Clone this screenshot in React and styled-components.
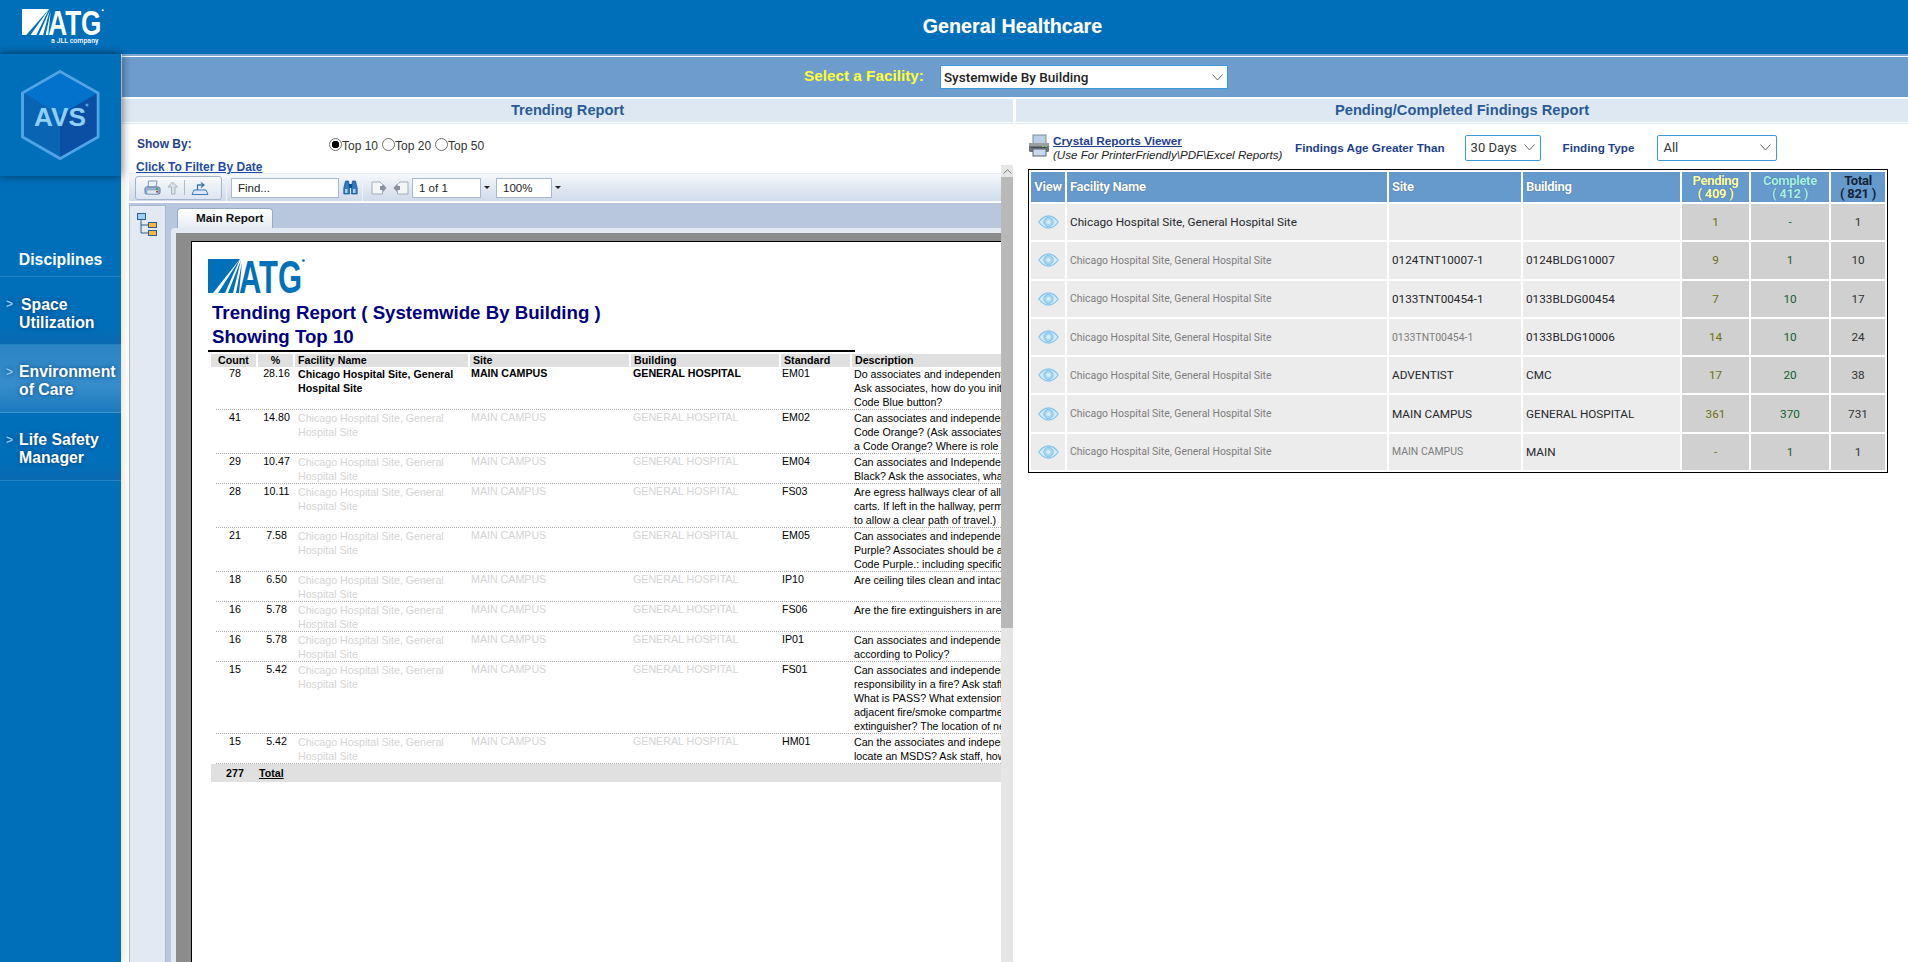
import styled, { createGlobalStyle } from 'styled-components';

const GlobalStyle = createGlobalStyle`
  html, body { margin: 0; padding: 0; background: #fff; }
  body { font-family: "Liberation Sans", Arial, sans-serif; font-size: 12px; color: #000; }
  * { box-sizing: border-box; }
`;

const AtgLogo = ({ color, width, height }) => (
  <svg width={width} height={height} viewBox="0 0 97 34" preserveAspectRatio="none" overflow="visible">
    <g fill={color}>
      <polygon points="0,0 32,0 5,34 0,34" />
      <polygon points="32,0 10,34 17,34" />
      <polygon points="33,1 20,34 25,34" />
      <polygon points="34,3 28,34 31,34" />
      <text x="31" y="33.6" fontFamily="Liberation Sans" fontWeight="700" fontSize="46" textLength="63" lengthAdjust="spacingAndGlyphs">ATG</text>
      <circle cx="95.5" cy="1.6" r="1.3" />
    </g>
  </svg>
);

const AvsLogo = () => (
  <svg width="80" height="90" viewBox="0 0 80 90">
    <polygon points="39,1.5 77,23 77,67 39,88.5 1.5,67 1.5,23" fill="#0a64b4" stroke="#4fa3e6" strokeWidth="3" />
    <polygon points="39,3.5 75,23.5 39,45 3.5,23.5" fill="#0272cc" />
    <polygon points="39,45 75.5,24 75.5,66 39,87" fill="#0a4fa3" />
    <text x="39" y="56" textAnchor="middle" fontFamily="Liberation Sans" fontWeight="700" fontSize="25" fill="#8ed0f6" textLength="52" lengthAdjust="spacingAndGlyphs">AVS</text>
    <circle cx="66" cy="35" r="1.5" fill="#4fa3e6" />
  </svg>
);

const Chevron = () => (
  <svg width="11" height="7" viewBox="0 0 11 7" fill="none" stroke="#666" strokeWidth="1">
    <path d="M0.5 0.5 L5.5 6 L10.5 0.5" />
  </svg>
);

const EyeIcon = () => (
  <svg width="21" height="14" viewBox="0 0 21 14">
    <path d="M0.8 7 C4 2.4 7 1 10.5 1 C14 1 17 2.4 20.2 7 C17 11.6 14 13 10.5 13 C7 13 4 11.6 0.8 7 Z" fill="#d5eaf8" stroke="#8cc6ec" strokeWidth="1.3" />
    <circle cx="10.5" cy="7" r="4.6" fill="#a6d5f2" stroke="#84c2ea" strokeWidth="1" />
    <circle cx="10.5" cy="7" r="2.1" fill="#d8eefb" />
  </svg>
);

const BigPrinter = () => (
  <svg width="22" height="24" viewBox="0 0 22 24">
    <rect x="5" y="1" width="13" height="9" fill="#b9cfe6" stroke="#7d8a99" />
    <rect x="1" y="9" width="20" height="9" rx="1.5" fill="#6f7478" />
    <rect x="1" y="9" width="20" height="3" fill="#9a9fa3" />
    <rect x="3" y="13" width="16" height="1" fill="#4a4e52" />
    <rect x="5" y="15" width="13" height="7" fill="#c6d9ee" stroke="#5a6672" />
    <rect x="14" y="12" width="2" height="1" fill="#6fd06f" />
    <rect x="17" y="12" width="2" height="1" fill="#6fd06f" />
  </svg>
);

const ToolPrinter = () => (
  <svg width="17" height="16" viewBox="0 0 17 16">
    <path d="M4.5 1 L13 1 L12 7 L4 7 Z" fill="#eef3f9" stroke="#7d94b4" />
    <rect x="1" y="7" width="15" height="7" rx="1.5" fill="#9db6d6" stroke="#5b7ba4" />
    <rect x="3" y="10" width="11" height="4" fill="#dfe8f3" stroke="#7d94b4" strokeWidth="0.6" />
    <rect x="12" y="8" width="2" height="2" fill="#4aa04a" />
    <rect x="12" y="11" width="2" height="1.5" fill="#c04040" />
  </svg>
);

const ToolUp = () => (
  <svg width="13" height="14" viewBox="0 0 13 14">
    <path d="M6.5 1 L11.5 6 L9 6 L9 13 L5.5 13 L5.5 6 L2 6 Z" fill="#dce2ea" stroke="#a8b3c0" strokeWidth="1" />
  </svg>
);

const ToolExport = () => (
  <svg width="18" height="16" viewBox="0 0 18 16" fill="none">
    <path d="M1 14.5 L17 14.5 L15 10 L3 10 Z" fill="#dbe8f7" stroke="#3d78b8" />
    <path d="M6.5 10 L6.5 5 L12 5 M10 2.5 L13 5 L10 7.5" stroke="#3d78b8" strokeWidth="1.3" />
  </svg>
);

const Binoculars = () => (
  <svg width="15" height="15" viewBox="0 0 15 15">
    <path d="M2.5 1 L5.5 1 L6.5 7 L6.5 14 L0.8 14 L0.8 8 Z" fill="#2f78c4" stroke="#134f8e" strokeWidth="0.7" />
    <path d="M12.5 1 L9.5 1 L8.5 7 L8.5 14 L14.2 14 L14.2 8 Z" fill="#2f78c4" stroke="#134f8e" strokeWidth="0.7" />
    <rect x="6" y="4" width="3" height="4" fill="#134f8e" />
    <rect x="2" y="9" width="2.5" height="4" fill="#a9d0f2" />
    <rect x="10" y="9" width="2.5" height="4" fill="#a9d0f2" />
  </svg>
);

const PageIcon = ({ flip }) => (
  <svg width="16" height="14" viewBox="0 0 16 14" style={flip ? { transform: 'scaleX(-1)' } : undefined}>
    <path d="M1 1 L9 1 L11.5 3.5 L11.5 13 L1 13 Z" fill="#f4f5f7" stroke="#a4adb8" />
    <path d="M9 5 L12 5 L12 3 L15.5 7 L12 11 L12 9 L9 9 Z" fill="#8b929b" />
  </svg>
);

const TreeIcon = () => (
  <svg width="20" height="23" viewBox="0 0 20 23" fill="none">
    <path d="M4 7 L4 20 L12 20 M4 12 L12 12" stroke="#2c5f8d" strokeWidth="1" />
    <rect x="0.5" y="0.5" width="8" height="6" fill="#9fd0f2" stroke="#2c5f8d" />
    <rect x="11.5" y="9.5" width="8" height="5" fill="#f6b93e" stroke="#2c5f8d" />
    <rect x="11.5" y="17.5" width="8" height="5" fill="#f6b93e" stroke="#2c5f8d" />
  </svg>
);

const trendingRows = [
  { count: 78, pct: '28.16', std: 'EM01', strong: true, lines: ['Do associates and independent contractors', 'Ask associates, how do you initiate a', 'Code Blue button?'], h: 44 },
  { count: 41, pct: '14.80', std: 'EM02', lines: ['Can associates and independent contractors', 'Code Orange? (Ask associates what to do', 'a Code Orange?  Where is role defined'], h: 44 },
  { count: 29, pct: '10.47', std: 'EM04', lines: ['Can associates and Independent contractors', 'Black? Ask the associates, what to do'], h: 30 },
  { count: 28, pct: '10.11', std: 'FS03', lines: ['Are egress hallways clear of all equipment', 'carts. If left in the hallway, permitted', 'to allow a clear path of travel.)'], h: 44 },
  { count: 21, pct: '7.58', std: 'EM05', lines: ['Can associates and independent contractors', 'Purple? Associates should be able to', 'Code Purple.: including specific roles'], h: 44 },
  { count: 18, pct: '6.50', std: 'IP10', lines: ['Are ceiling tiles clean and intact?'], h: 30 },
  { count: 16, pct: '5.78', std: 'FS06', lines: ['Are the fire extinguishers in areas'], h: 30 },
  { count: 16, pct: '5.78', std: 'IP01', lines: ['Can associates and independent contractors', 'according to Policy?'], h: 30 },
  { count: 15, pct: '5.42', std: 'FS01', lines: ['Can associates and independent contractors', 'responsibility in a fire? Ask staff what', 'What is PASS? What extension is the', 'adjacent fire/smoke compartment? The', 'extinguisher? The location of nearest'], h: 72 },
  { count: 15, pct: '5.42', std: 'HM01', lines: ['Can the associates and independent', 'locate an MSDS? Ask staff, how do you'], h: 30 },
];

const findingRows = [
  { facility: 'Chicago Hospital Site, General Hospital Site', main: true, site: '', building: '', pending: '1', complete: '-', total: '1' },
  { facility: 'Chicago Hospital Site, General Hospital Site', site: '0124TNT10007-1', building: '0124BLDG10007', pending: '9', complete: '1', total: '10' },
  { facility: 'Chicago Hospital Site, General Hospital Site', site: '0133TNT00454-1', building: '0133BLDG00454', pending: '7', complete: '10', total: '17' },
  { facility: 'Chicago Hospital Site, General Hospital Site', site: '0133TNT00454-1', siteDim: true, building: '0133BLDG10006', pending: '14', complete: '10', total: '24' },
  { facility: 'Chicago Hospital Site, General Hospital Site', site: 'ADVENTIST', building: 'CMC', pending: '17', complete: '20', total: '38' },
  { facility: 'Chicago Hospital Site, General Hospital Site', site: 'MAIN CAMPUS', building: 'GENERAL HOSPITAL', pending: '361', complete: '370', total: '731' },
  { facility: 'Chicago Hospital Site, General Hospital Site', site: 'MAIN CAMPUS', siteDim: true, building: 'MAIN', pending: '-', complete: '1', total: '1' },
];

const App = () => (
  <>
    <GlobalStyle />
    <Page>
      <Header>
        <HeaderLogo>
          <AtgLogo color="#fff" width={82} height={26} />
          <JllText>a JLL company</JllText>
        </HeaderLogo>
        <HeaderTitle>General Healthcare</HeaderTitle>
      </Header>

      <Body>
        <Sidebar>
          <LogoBox><AvsLogo /></LogoBox>
          <Disciplines>Disciplines</Disciplines>
          <NavItem $nudge={1}><NavMark>&gt;</NavMark><SpaceWord>Space</SpaceWord><br />Utilization</NavItem>
          <NavItem $active><NavMark>&gt;</NavMark>Environment<br />of Care</NavItem>
          <NavItem><NavMark>&gt;</NavMark>Life Safety<br />Manager</NavItem>
        </Sidebar>

        <Main>
          <FacilityBar>
            <FacilityLabel>Select a Facility:</FacilityLabel>
            <FacilitySelect>
              Systemwide By Building
              <Chevron />
            </FacilitySelect>
          </FacilityBar>

          <Panels>
            <LeftPanel>
              <PanelHeading>Trending Report</PanelHeading>
              <ShowBy>
                <ShowByLabel>Show By:</ShowByLabel>
                <RadioGroup>
                  <Radio $checked />Top 10
                  <Radio />Top 20
                  <Radio />Top 50
                </RadioGroup>
              </ShowBy>
              <FilterLink>Click To Filter By Date</FilterLink>

              <Viewer>
                <ViewerMain>
                  <Toolbar>
                    <ToolGroup>
                      <ToolPrinter />
                      <ToolUp />
                      <ToolDivider />
                      <ToolExport />
                    </ToolGroup>
                    <ToolSep />
                    <ToolInput $w={108}>Find...</ToolInput>
                    <Binoculars />
                    <ToolSep />
                    <IconSlot $left={4}><PageIcon /></IconSlot>
                    <IconSlot $left={2}><PageIcon flip /></IconSlot>
                    <ToolInput $w={69} $left={-1}>1 of 1</ToolInput>
                    <Caret />
                    <ToolInput $w={56}>100%</ToolInput>
                    <Caret />
                  </Toolbar>

                  <ViewerContent>
                    <TreePanel><TreeIcon /></TreePanel>
                    <TabArea>
                      <MainTab>Main Report</MainTab>
                      <TabFrame>
                        <GreyDesk>
                          <ReportPage>
                            <ReportLogo><AtgLogo color="#0070b9" width={97} height={34} /></ReportLogo>
                            <ReportTitle>Trending Report ( Systemwide By Building )<br />Showing Top 10</ReportTitle>
                            <TitleRule />
                            <ReportHead>
                              <HeadCell $center>Count</HeadCell>
                              <HeadCell $center>%</HeadCell>
                              <HeadCell>Facility Name</HeadCell>
                              <HeadCell>Site</HeadCell>
                              <HeadCell>Building</HeadCell>
                              <HeadCell>Standard</HeadCell>
                              <HeadCell>Description</HeadCell>
                            </ReportHead>
                            {trendingRows.map((row, i) => (
                              <ReportRow key={i} $h={row.h}>
                                <CountCell>{row.count}</CountCell>
                                <PctCell>{row.pct}</PctCell>
                                <FacilityCell $strong={row.strong}>Chicago Hospital Site, General Hospital Site</FacilityCell>
                                <SiteCell $strong={row.strong} $dim={!row.strong}>MAIN CAMPUS</SiteCell>
                                <SiteCell $strong={row.strong} $dim={!row.strong} $pad={1}>GENERAL HOSPITAL</SiteCell>
                                <SiteCell>{row.std}</SiteCell>
                                <DescCell>{row.lines.map((l, j) => <div key={j}>{l}</div>)}</DescCell>
                              </ReportRow>
                            ))}
                            <TotalBar>
                              <TotalCount>277</TotalCount>
                              <TotalLabel>Total</TotalLabel>
                            </TotalBar>
                          </ReportPage>
                        </GreyDesk>
                      </TabFrame>
                    </TabArea>
                  </ViewerContent>
                </ViewerMain>
                <Scrollbar>
                  <ScrollUp>
                    <svg width="9" height="5" viewBox="0 0 9 5" fill="none" stroke="#777"><path d="M0.5 4.5 L4.5 0.8 L8.5 4.5" /></svg>
                  </ScrollUp>
                  <ScrollThumb />
                </Scrollbar>
              </Viewer>
            </LeftPanel>

            <RightPanel>
              <PanelHeading>Pending/Completed Findings Report</PanelHeading>
              <FindingsTools>
                <PrinterSlot><BigPrinter /></PrinterSlot>
                <CrystalBlock>
                  <CrystalLink>Crystal Reports Viewer</CrystalLink>
                  <CrystalNote>(Use For PrinterFriendly\PDF\Excel Reports)</CrystalNote>
                </CrystalBlock>
                <ToolLabel $left={13}>Findings Age Greater Than</ToolLabel>
                <FilterSelect $w={76} $left={20}>30 Days<Chevron /></FilterSelect>
                <ToolLabel $left={22}>Finding Type</ToolLabel>
                <FilterSelect $w={120} $left={23}>All<Chevron /></FilterSelect>
              </FindingsTools>

              <FindingsTable>
                <thead>
                  <tr>
                    <Th $w={34} $center>View</Th>
                    <Th $w={320}>Facility Name</Th>
                    <Th $w={132}>Site</Th>
                    <Th $w={157}>Building</Th>
                    <Th $w={67} $center $color="#ffffa6">Pending<br />( 409 )</Th>
                    <Th $w={78} $center $color="#a9f3e4">Complete<br />( 412 )</Th>
                    <Th $w={54} $center $color="#14233a" $plain>Total<br />( 821 )</Th>
                  </tr>
                </thead>
                <tbody>
                  {findingRows.map((row, i) => (
                    <tr key={i}>
                      <Td $center><EyeIcon /></Td>
                      <Td $dim={!row.main}>{row.facility}</Td>
                      <Td $dim={row.siteDim}>{row.site}</Td>
                      <Td>{row.building}</Td>
                      <NumTd $color="#6f6f12">{row.pending}</NumTd>
                      <NumTd $color="#14602f">{row.complete}</NumTd>
                      <NumTd $color="#333">{row.total}</NumTd>
                    </tr>
                  ))}
                </tbody>
              </FindingsTable>
            </RightPanel>
          </Panels>
        </Main>
      </Body>
    </Page>
  </>
);

export default App;

const Page = styled.div`
  width: 1908px;
  height: 962px;
  overflow: hidden;
  display: flex;
  flex-direction: column;
`;

const Header = styled.header`
  height: 54px;
  flex: none;
  background: #006fba;
  display: flex;
  align-items: center;
`;

const HeaderLogo = styled.div`
  width: 121px;
  padding: 9px 0 0 22px;
  display: flex;
  flex-direction: column;
  height: 54px;
`;

const JllText = styled.div`
  color: #fff;
  font: 500 7px "Roboto", sans-serif;
  margin: 2px 0 0 29px;
  white-space: nowrap;
  line-height: 9px;
`;

const HeaderTitle = styled.div`
  flex: 1;
  padding: 0 4px 2px 0;
  text-align: center;
  color: #fff;
  font: 700 19.7px "Liberation Sans", sans-serif;
  text-shadow: 0 0 1px rgba(255, 255, 255, 0.3);
`;

const Body = styled.div`
  flex: 1;
  display: flex;
  min-height: 0;
`;

const Sidebar = styled.nav`
  width: 121px;
  flex: none;
  background: #006fba;
  position: relative;
  z-index: 2;
  box-shadow: 2px 0 8px rgba(0, 0, 0, 0.12);
`;

const LogoBox = styled.div`
  height: 122px;
  background: #006fba;
  padding: 16px 0 0 21px;
  box-shadow: 0 0 9px rgba(0, 0, 0, 0.5);
  position: relative;
`;

const Disciplines = styled.div`
  height: 101px;
  padding-top: 75px;
  text-align: center;
  color: #fff;
  font: 700 15.8px/18px "Liberation Sans", sans-serif;
  border-bottom: 1px solid rgba(255, 255, 255, 0.12);
`;

const NavItem = styled.div`
  height: 68px;
  padding: ${(p) => 18 + (p.$nudge || 0)}px 0 0 19px;
  position: relative;
  color: #fff;
  font: 700 15.8px/18px "Liberation Sans", sans-serif;
  text-shadow: 0 0 4px rgba(0, 50, 100, 0.8);
  white-space: nowrap;
  background: ${(p) => (p.$active
    ? 'linear-gradient(#2c84c5, #378dcb 60%, #1c7abf)'
    : 'linear-gradient(#006fba 70%, #0a69b0)')};
  border-bottom: 1px solid rgba(255, 255, 255, 0.12);
`;

const SpaceWord = styled.span`
  padding-left: 2px;
`;

const NavMark = styled.span`
  position: absolute;
  left: 6px;
  top: 18px;
  color: #86c8f0;
  font-size: 12px;
`;

const Main = styled.main`
  flex: 1;
  min-width: 0;
  margin-left: 1px;
  background: #fff;
  display: flex;
  flex-direction: column;
`;

const FacilityBar = styled.div`
  height: 43px;
  flex: none;
  background: #6d9ccd;
  border-top: 2px solid #7ea8d4;
  box-shadow: inset 0 1px 0 #fff;
  padding: 9px 0 0 2px;
  display: flex;
  justify-content: center;
`;

const FacilityLabel = styled.div`
  color: #ffff33;
  font: 700 15.3px/22px "Liberation Sans", sans-serif;
  margin-right: 16px;
`;

const FacilitySelect = styled.div`
  width: 288px;
  height: 24px;
  background: #fff;
  border: 1px solid #3a9ae0;
  padding: 0 4px 0 3px;
  display: flex;
  align-items: center;
  justify-content: space-between;
  font: 500 13.5px "Roboto", sans-serif;
  color: #222;
`;

const Panels = styled.div`
  flex: 1;
  min-height: 0;
  display: flex;
  gap: 3px;
  padding-top: 2px;
`;

const LeftPanel = styled.section`
  width: 891px;
  flex: none;
  display: flex;
  flex-direction: column;
`;

const RightPanel = styled.section`
  flex: 1;
  min-width: 0;
`;

const PanelHeading = styled.div`
  height: 23px;
  flex: none;
  background: #dee8f3;
  box-shadow: 0 1px 0 #fff, 0 2px 0 #dee8f3;
  text-align: center;
  color: #2a5a96;
  font: 700 14.67px/23px "Liberation Sans", sans-serif;
`;

const ShowBy = styled.div`
  display: grid;
  grid-template-columns: 192px auto;
  padding: 15px 0 0 15px;
  height: 40px;
  justify-content: start;
`;

const ShowByLabel = styled.div`
  color: #1f3f8c;
  font: 700 12px/15px "Liberation Sans", sans-serif;
`;

const RadioGroup = styled.div`
  display: flex;
  align-items: center;
  height: 15px;
  color: #333;
  font: 12px "Liberation Sans", sans-serif;
  margin-top: 1px;
`;

const Radio = styled.span`
  width: 13px;
  height: 13px;
  margin: -2px 0 0 4px;
  border-radius: 50%;
  border: 1px solid #6f6f6f;
  background: ${(p) => (p.$checked ? 'radial-gradient(circle, #000 3.5px, #fff 4px)' : '#fff')};
  &:first-child { margin-left: 0; }
`;

const FilterLink = styled.a`
  display: block;
  height: 11px;
  padding-left: 14px;
  color: #1f4ba5;
  font: 700 12px/11px "Liberation Sans", sans-serif;
  text-decoration: underline;
  position: relative;
`;

const Viewer = styled.div`
  flex: 1;
  min-height: 0;
  display: flex;
  margin-left: 7px;
`;

const ViewerMain = styled.div`
  flex: 1;
  min-width: 0;
  display: flex;
  flex-direction: column;
`;

const Toolbar = styled.div`
  height: 28px;
  flex: none;
  background: linear-gradient(#f6f8fb, #cfdaea);
  border-top: 1px solid #e8eef5;
  padding-left: 6px;
  display: flex;
  align-items: center;
  gap: 4px;
`;

const ToolGroup = styled.div`
  width: 87px;
  height: 24px;
  border: 1px solid #a3b5cd;
  border-radius: 3px;
  background: linear-gradient(#f7f9fc, #dde5f0);
  display: flex;
  align-items: center;
  gap: 5px;
  padding-left: 8px;
`;

const ToolDivider = styled.span`
  width: 1px;
  height: 15px;
  background: #aebccd;
  margin-right: 1px;
`;

const ToolSep = styled.span`
  width: 1px;
  height: 27px;
  background: #eef2f7;
`;

const IconSlot = styled.span`
  display: flex;
  margin-left: ${(p) => p.$left}px;
`;

const ToolInput = styled.div`
  width: ${(p) => p.$w}px;
  height: 20px;
  margin-left: ${(p) => p.$left || 0}px;
  background: #fff;
  border: 1px solid #a8b8ce;
  padding-left: 6px;
  font: 11.5px/18px "Liberation Sans", sans-serif;
  color: #222;
`;

const Caret = styled.span`
  width: 0;
  height: 0;
  border-left: 3px solid transparent;
  border-right: 3px solid transparent;
  border-top: 3px solid #222;
  margin: 0 2px 0 -1px;
`;

const ViewerContent = styled.div`
  flex: 1;
  min-height: 0;
  display: flex;
  border-top: 2px solid #fff;
  background: #b8c7de;
`;

const TreePanel = styled.div`
  width: 37px;
  flex: none;
  margin-top: 2px;
  background: #e3e9f2;
  border: 1px solid #a9b9d0;
  border-bottom: none;
  padding: 7px 0 0 7px;
`;

const TabArea = styled.div`
  flex: 1;
  min-width: 0;
  display: flex;
  flex-direction: column;
  padding-left: 5px;
`;

const MainTab = styled.div`
  width: 96px;
  height: 20px;
  flex: none;
  margin: 5px 0 0 6px;
  background: linear-gradient(#fff, #e6ecf4);
  border: 1px solid #96a9c6;
  border-bottom: none;
  border-radius: 4px 4px 0 0;
  padding-left: 18px;
  font: 700 11.67px/18px "Liberation Sans", sans-serif;
  color: #111;
`;

const TabFrame = styled.div`
  flex: 1;
  min-height: 0;
  display: flex;
  background: #e3e9f2;
  border-radius: 4px 0 0 0;
  padding: 5px 0 0 5px;
`;

const GreyDesk = styled.div`
  flex: 1;
  min-width: 0;
  display: flex;
  background: #8c8c8c;
  padding: 8px 0 0 15px;
`;

const ReportPage = styled.div`
  flex: 1;
  min-width: 0;
  background: #fff;
  border-left: 1px solid #000;
  border-top: 1px solid #000;
  overflow: hidden;
  font: 10.67px/14px "Liberation Sans", sans-serif;
  color: #000;
`;

const ReportLogo = styled.div`
  height: 34px;
  margin: 17px 0 8px 16px;
  display: flex;
`;

const ReportTitle = styled.div`
  margin-left: 20px;
  color: #000080;
  font: 700 18.67px/24px "Liberation Sans", sans-serif;
  white-space: nowrap;
`;

const TitleRule = styled.div`
  width: 647px;
  height: 2px;
  margin: 1px 0 2px 16px;
  background: #000;
`;

const ReportHead = styled.div`
  display: grid;
  grid-template-columns: 47px 37px 175px 161px 150px 71px 300px;
  margin-left: 19px;
  height: 12px;
`;

const HeadCell = styled.div`
  background: #e0e0e0;
  border-right: 2px solid #fff;
  padding-left: ${(p) => (p.$center ? 0 : 3)}px;
  text-align: ${(p) => (p.$center ? 'center' : 'left')};
  font: 700 10.67px/13px "Liberation Sans", sans-serif;
  &:last-child { border-right: none; }
`;

const ReportRow = styled.div`
  display: grid;
  grid-template-columns: 42px 37px 176px 161px 150px 71px 300px;
  margin-left: 24px;
  height: ${(p) => p.$h}px;
  border-bottom: 1px dotted #aaa;
  white-space: nowrap;
`;

const CountCell = styled.div`
  text-align: center;
  padding-right: 4px;
`;

const PctCell = styled.div`
  text-align: center;
`;

const FacilityCell = styled.div`
  padding: 1px 8px 0 3px;
  white-space: normal;
  font-weight: ${(p) => (p.$strong ? 700 : 400)};
  color: ${(p) => (p.$strong ? '#000' : '#d4d4d4')};
`;

const SiteCell = styled.div`
  padding-left: ${(p) => p.$pad || 0}px;
  font-weight: ${(p) => (p.$strong ? 700 : 400)};
  color: ${(p) => (p.$dim ? '#d4d4d4' : '#000')};
`;

const DescCell = styled.div`
  padding: 1px 0 0 1px;
`;

const TotalBar = styled.div`
  margin-left: 19px;
  height: 18px;
  background: #e0e0e0;
  display: flex;
  align-items: center;
  font-weight: 700;
`;

const TotalCount = styled.div`
  width: 48px;
  text-align: center;
`;

const TotalLabel = styled.div`
  text-decoration: underline;
`;

const Scrollbar = styled.div`
  width: 12px;
  flex: none;
  margin-top: -8px;
  background: #e6e6e6;
  display: flex;
  flex-direction: column;
`;

const ScrollUp = styled.div`
  height: 12px;
  display: flex;
  align-items: center;
  justify-content: center;
`;

const ScrollThumb = styled.div`
  height: 451px;
  background: #b9b9b9;
`;

const FindingsTools = styled.div`
  height: 47px;
  display: flex;
  align-items: center;
  padding: 4px 0 0 12px;
`;

const PrinterSlot = styled.div`
  width: 22px;
  height: 24px;
  margin-top: -4px;
`;

const CrystalBlock = styled.div`
  margin: 0 0 0 3px;
  width: 229px;
  white-space: nowrap;
`;

const CrystalLink = styled.a`
  display: block;
  color: #1f3f8c;
  font: 700 11.8px/13px "Liberation Sans", sans-serif;
  text-decoration: underline;
`;

const CrystalNote = styled.div`
  color: #222;
  font: italic 11.6px/13px "Liberation Sans", sans-serif;
`;

const ToolLabel = styled.div`
  margin-left: ${(p) => p.$left}px;
  color: #1f3f8c;
  font: 700 11.7px "Liberation Sans", sans-serif;
  white-space: nowrap;
`;

const FilterSelect = styled.div`
  width: ${(p) => p.$w}px;
  height: 26px;
  margin-left: ${(p) => p.$left}px;
  border: 1px solid #3a9ae0;
  border-radius: 2px;
  background: #fff;
  padding: 0 5px;
  display: flex;
  align-items: center;
  justify-content: space-between;
  font: 13px "Roboto", sans-serif;
  color: #333;
`;

const FindingsTable = styled.table`
  width: 860px;
  margin-left: 12px;
  table-layout: fixed;
  border: 1px solid #000;
  border-spacing: 2px;
  font-family: "Roboto", sans-serif;
`;

const Th = styled.th`
  width: ${(p) => p.$w}px;
  height: 30px;
  padding: 0 0 1px ${(p) => (p.$center ? 0 : 3)}px;
  background: #6699cc;
  color: ${(p) => p.$color || '#fff'};
  text-align: ${(p) => (p.$center ? 'center' : 'left')};
  font: 700 13px/13px "Roboto", sans-serif;
  letter-spacing: -0.3px;
  text-shadow: ${(p) => (p.$plain ? 'none' : '0 0 1px rgba(0, 40, 90, 0.6)')};
`;

const Td = styled.td`
  height: 36.3px;
  padding: 0 0 0 ${(p) => (p.$center ? 0 : 3)}px;
  background: #ececec;
  text-align: ${(p) => (p.$center ? 'center' : 'left')};
  color: ${(p) => (p.$dim ? '#7d7d7d' : '#26282c')};
  font: ${(p) => (p.$dim ? '10.45px' : '11.75px')} "Roboto", sans-serif;
  white-space: nowrap;
  svg { display: block; margin: 0 auto; }
`;

const NumTd = styled.td`
  height: 36.3px;
  padding: 0;
  background: #d0d0d0;
  text-align: center;
  color: ${(p) => p.$color};
  font: 11.75px "Roboto", sans-serif;
`;
